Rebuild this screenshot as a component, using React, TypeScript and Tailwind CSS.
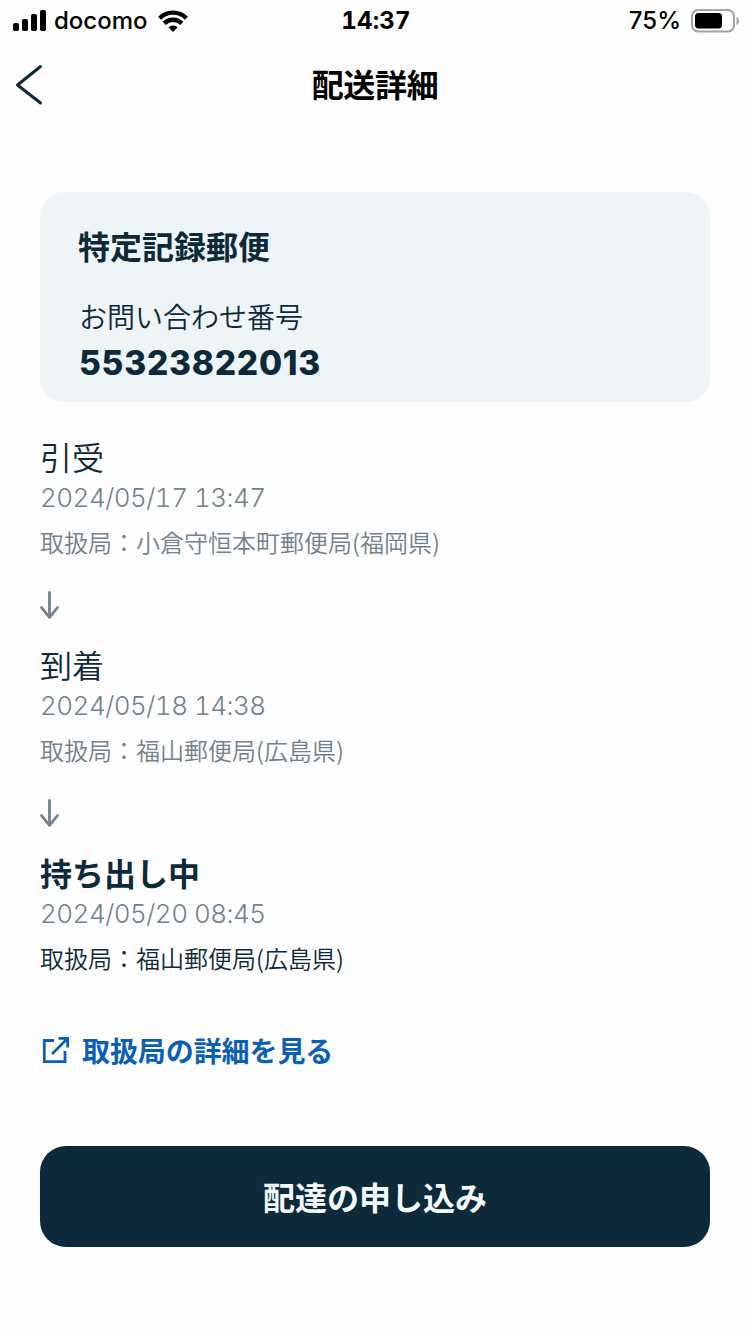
type StepData = { title: string; date: string; office: string; current?: boolean };

const steps: StepData[] = [
  { title: "引受", date: "2024/05/17 13:47", office: "取扱局：小倉守恒本町郵便局(福岡県)" },
  { title: "到着", date: "2024/05/18 14:38", office: "取扱局：福山郵便局(広島県)" },
  { title: "持ち出し中", date: "2024/05/20 08:45", office: "取扱局：福山郵便局(広島県)", current: true },
];

function StatusBar() {
  return (
    <div className="grid h-10 grid-cols-3 items-center pl-[13px] pr-[11px] font-['Inter','Noto_Sans_CJK_JP',sans-serif] text-[24px] text-black">
      <div className="flex items-center">
        <svg width="33" height="22" viewBox="0 0 33 22" className="shrink-0">
          <rect x="0" y="13" width="6" height="8" rx="1.8" />
          <rect x="9" y="9" width="6" height="12" rx="1.8" />
          <rect x="18" y="4" width="6" height="17" rx="1.8" />
          <rect x="27" y="0" width="6" height="21" rx="1.8" />
        </svg>
        <span className="ml-2 font-medium leading-[42px]">docomo</span>
        <svg width="30" height="22" viewBox="0 0 30 22" className="ml-[10px] shrink-0" fill="none" stroke="#000" strokeWidth="4.4">
          <path d="M1.6 8.2a19 19 0 0 1 26.8 0" />
          <path d="M6.2 13.4a12.4 12.4 0 0 1 17.6 0" />
          <path d="M15 22l-4.6-4.7a6.5 6.5 0 0 1 9.2 0z" fill="#000" stroke="none" />
        </svg>
      </div>
      <div className="text-center font-bold leading-[42px] tracking-[0.01em] tabular-nums">14:37</div>
      <div className="flex items-center justify-end">
        <span className="mr-[10px] font-medium leading-[42px]">75%</span>
        <svg width="48" height="24" viewBox="0 0 48 24" className="mb-px shrink-0">
          <rect x="1" y="1" width="42" height="21.5" rx="6" fill="none" stroke="#a3a3a3" strokeWidth="2" />
          <rect x="4" y="4" width="27" height="15.5" rx="3.5" />
          <path d="M45.5 8v8c1.7-.6 2.5-2.2 2.5-4s-.8-3.4-2.5-4z" fill="#a3a3a3" />
        </svg>
      </div>
    </div>
  );
}

function Step({ step }: { step: StepData }) {
  return (
    <li className="flex h-[208px] flex-col items-start whitespace-nowrap">
      <h2 className={step.current ? "h-12 text-[32px] font-bold leading-[48px]" : "h-12 text-[32px] font-[350] leading-[48px]"}>
        {step.title}
      </h2>
      <p className="h-9 font-['Inter'] text-[26px] font-light leading-9 tracking-[-0.02em] text-[#71828b] tabular-nums">{step.date}</p>
      <p className={step.current ? "mt-[6px] text-[24px] font-[350] leading-10" : "mt-[6px] text-[24px] font-[350] leading-10 text-[#71828b]"}>
        {step.office}
      </p>
      {!step.current && (
        <svg width="20" height="28" viewBox="0 0 20 28" className="mt-[29px]" fill="none" stroke="#71828b" strokeWidth="2.8" strokeLinecap="round" strokeLinejoin="round">
          <path d="M9.5 1.5v25M1.5 16.5l8 10 8-10" />
        </svg>
      )}
    </li>
  );
}

export default function App() {
  return (
    <main className="flex h-[1334px] w-[750px] flex-col overflow-hidden bg-[#fefefe] font-['Noto_Sans_CJK_JP',sans-serif] text-[#0d2a3a]">
      <StatusBar />
      <header className="grid h-[86px] grid-cols-[100px_1fr_100px] items-center">
        <button aria-label="戻る" className="pl-[15px] pt-[3px]">
          <svg width="30" height="42" viewBox="0 0 30 42" fill="none" stroke="#0d2a3a" strokeWidth="3" strokeLinecap="round" strokeLinejoin="round">
            <path d="M25.5 2.5L2.5 21l23 18" />
          </svg>
        </button>
        <h1 className="text-center text-[32px] font-bold leading-[48px] tracking-[-0.01em] text-black">配送詳細</h1>
      </header>

      <section className="mx-10 mt-[66px] flex h-[210px] shrink-0 flex-col rounded-[24px] bg-[#eff4f7] pl-[38px] pt-[29px] shadow-[0_0_50px_rgba(0,0,0,0.02)]">
        <h2 className="text-[32px] font-bold leading-[48px]">特定記録郵便</h2>
        <p className="mt-[27px] pl-px text-[28px] font-[350] leading-10">お問い合わせ番号</p>
        <p className="mt-[7px] pl-px font-['Inter'] text-[33.5px] font-extrabold leading-10 tracking-[0.022em]">55323822013</p>
      </section>

      <ol className="mx-10 mt-[30px]">
        {steps.map((step) => (
          <Step key={step.date} step={step} />
        ))}
      </ol>

      <a className="ml-[42px] mt-[-27px] flex items-center text-[28px] font-bold leading-[42px] tracking-[-0.003em] text-[#0b60b5]">
        <svg width="28" height="28" viewBox="0 0 28 28" fill="none" stroke="#0b60b5" strokeWidth="2.8" className="mr-[12px]">
          <path d="M12 4.5H2.3v21.2H23V15M16.5 2.3h9.2v9.2M25.5 2.5L10 18" />
        </svg>
        取扱局の詳細を見る
      </a>

      <button className="mx-10 mt-[75px] h-[101px] shrink-0 rounded-[26px] bg-[#0d2a3a] pb-[2px] text-[32px] font-bold leading-[48px] text-[#f5faff]">
        配達の申し込み
      </button>
    </main>
  );
}
